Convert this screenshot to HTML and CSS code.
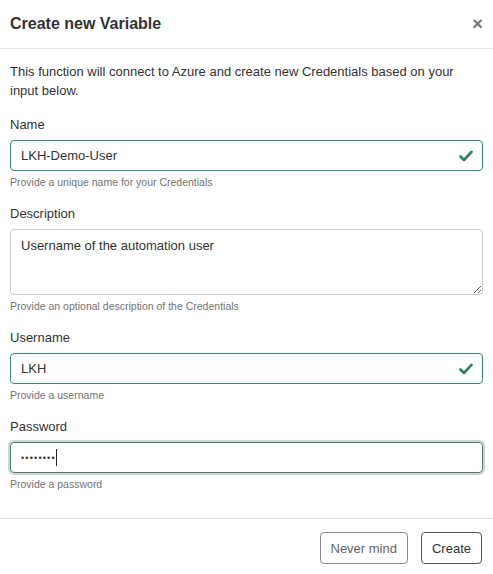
FILE: index.html
```html
<!DOCTYPE html>
<html>
<head>
<meta charset="utf-8">
<link rel="stylesheet" href="styles.css">
</head>
<body>
<div class="modal">
  <div class="modal-header">
    <h4 class="modal-title">Create new Variable</h4>
    <span class="close">&times;</span>
  </div>
  <div class="modal-body">
    <p class="intro">This function will connect to Azure and create new Credentials based on your input below.</p>
    <div class="field">
      <label class="label">Name</label>
      <div class="input valid"><span class="value">LKH-Demo-User</span>
        <svg class="check" width="14" height="12" viewBox="0 0 14 12"><path d="M1.5 6.5 L5 10 L12.5 1.8" fill="none" stroke="#2f8060" stroke-width="2.6" stroke-linecap="round" stroke-linejoin="round"/></svg>
      </div>
      <div class="help">Provide a unique name for your Credentials</div>
    </div>
    <div class="field">
      <label class="label">Description</label>
      <textarea class="textarea" readonly>Username of the automation user</textarea>
      <div class="help">Provide an optional description of the Credentials</div>
    </div>
    <div class="field">
      <label class="label">Username</label>
      <div class="input valid"><span class="value">LKH</span>
        <svg class="check" width="14" height="12" viewBox="0 0 14 12"><path d="M1.5 6.5 L5 10 L12.5 1.8" fill="none" stroke="#2f8060" stroke-width="2.6" stroke-linecap="round" stroke-linejoin="round"/></svg>
      </div>
      <div class="help">Provide a username</div>
    </div>
    <div class="field">
      <label class="label">Password</label>
      <div class="input focus"><span class="dots">••••••••</span><span class="caret"></span></div>
      <div class="help">Provide a password</div>
    </div>
  </div>
  <div class="modal-footer">
    <button class="btn muted">Never mind</button>
    <button class="btn">Create</button>
  </div>
</div>
</body>
</html>
```
FILE: styles.css
```css
* { box-sizing: border-box; }
html, body { margin: 0; padding: 0; background: #fff; }
body {
  font-family: "Liberation Sans", Arial, Helvetica, sans-serif;
  color: #333;
  font-size: 13px;
  line-height: 19px;
}
.modal { width: 493px; }
.modal-header {
  height: 49px;
  padding: 0 10px;
  display: flex;
  align-items: center;
  justify-content: space-between;
  border-bottom: 1px solid #e5e5e5;
}
.modal-title {
  margin: 0;
  font-size: 16px;
  font-weight: bold;
  line-height: 22px;
  color: #333;
  padding-bottom: 1px;
}
.close {
  font-size: 19px;
  font-weight: bold;
  color: #777;
  line-height: 20px;
  margin-right: 0;
}
.modal-body {
  padding: 13px 10px 26px;
}
.intro { margin: 0 0 15px; }
.field { margin-bottom: 14px; }
.field:last-child { margin-bottom: 0; }
.label { display: block; margin-bottom: 6px; }
.input {
  height: 31px;
  border: 1px solid #3a8a6d;
  border-radius: 4px;
  display: flex;
  align-items: center;
  padding: 0 10px;
  position: relative;
}
.input .value { flex: 1; }
.check { margin-right: -1px; }
.input.focus {
  border-color: #4a7d6c;
  box-shadow: 0 0 0 2px #cdd5d3;
}
.dots { font-size: 9px; letter-spacing: 1.2px; line-height: 10px; color: #333; }
.caret { width: 1px; height: 17px; background: #222; margin-left: 0; }
.textarea {
  display: block;
  width: 100%;
  height: 66px;
  border: 1px solid #ccc;
  border-radius: 4px;
  padding: 6px 10px;
  font: inherit;
  color: #333;
  resize: vertical;
  outline: none;
}
.help {
  font-size: 10.5px;
  line-height: 15px;
  color: #737373;
  margin-top: 4px;
}
.modal-footer {
  border-top: 1px solid #e5e5e5;
  padding: 13px 11px 10px;
  display: flex;
  justify-content: flex-end;
  gap: 13px;
}
.btn {
  font-family: inherit;
  font-size: 13px;
  height: 32px;
  padding: 0 10px;
  background: #fff;
  border: 1px solid #555;
  border-radius: 4px;
  color: #333;
}
.btn.muted { border-color: #888; color: #666; }
```
